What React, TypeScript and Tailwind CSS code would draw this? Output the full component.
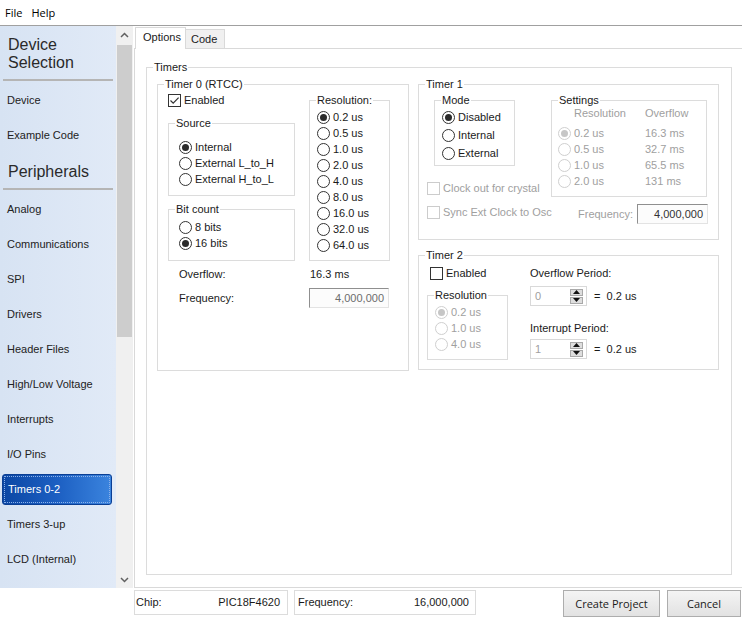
// Timer configuration page of the project wizard: sidebar, tabbed options, status bar.

import clsx from "clsx";
import type { ReactNode } from "react";

const peripherals = [
  "Analog",
  "Communications",
  "SPI",
  "Drivers",
  "Header Files",
  "High/Low Voltage",
  "Interrupts",
  "I/O Pins",
  "Timers 0-2",
  "Timers 3-up",
  "LCD (Internal)",
];

const resolutions = ["0.2 us", "0.5 us", "1.0 us", "2.0 us", "4.0 us", "8.0 us", "16.0 us", "32.0 us", "64.0 us"];

const timer1Settings = [
  ["0.2 us", "16.3 ms"],
  ["0.5 us", "32.7 ms"],
  ["1.0 us", "65.5 ms"],
  ["2.0 us", "131 ms"],
];

function Group({
  title,
  className,
  bodyClass,
  children,
}: {
  title: string;
  className?: string;
  bodyClass?: string;
  children?: ReactNode;
}) {
  return (
    <fieldset className={clsx("min-w-0 shrink-0 border border-[#dcdcdc]", className)}>
      <legend className="ml-[6px] px-[1px] leading-[13px]">{title}</legend>
      <div className={bodyClass}>{children}</div>
    </fieldset>
  );
}

function RadioDot({ checked, disabled }: { checked?: boolean; disabled?: boolean }) {
  return (
    <span
      className={clsx(
        "flex h-[13px] w-[13px] shrink-0 items-center justify-center rounded-full border bg-white",
        disabled ? "border-[#cfcfcf]" : "border-[#333333]"
      )}
    >
      {checked && (
        <span className={clsx("h-[7px] w-[7px] rounded-full", disabled ? "bg-[#c6c6c6]" : "bg-[#2b2b2b]")} />
      )}
    </span>
  );
}

function Radio({
  label,
  checked,
  disabled,
  tall,
}: {
  label: string;
  checked?: boolean;
  disabled?: boolean;
  tall?: boolean;
}) {
  return (
    <div className={clsx("flex items-center", tall ? "h-[18px]" : "h-[16px]")}>
      <RadioDot checked={checked} disabled={disabled} />
      <span className={clsx("ml-[3px] whitespace-nowrap", disabled && "text-[#a0a0a0]")}>{label}</span>
    </div>
  );
}

function Check({ label, checked, disabled }: { label: string; checked?: boolean; disabled?: boolean }) {
  return (
    <div className="flex h-[13px] items-center">
      <span
        className={clsx(
          "flex h-[13px] w-[13px] shrink-0 items-center justify-center border bg-white",
          disabled ? "border-[#cccccc]" : "border-[#333333]"
        )}
      >
        {checked && (
          <svg width="11" height="11" viewBox="0 0 11 11">
            <path d="M1.5 5.5 L4.2 8.2 L9.6 2.6" stroke="#333333" strokeWidth="1.2" fill="none" />
          </svg>
        )}
      </span>
      <span className={clsx("ml-[3px] whitespace-nowrap", disabled && "text-[#a0a0a0]")}>{label}</span>
    </div>
  );
}

function SunkenInput({ value, muted, className }: { value: string; muted?: boolean; className?: string }) {
  return (
    <div
      className={clsx(
        "flex h-[20px] items-center justify-end border border-t-[#8f8f8f] border-l-[#8f8f8f] border-r-[#e3e3e3] border-b-[#e3e3e3] bg-[#fcfcfc] pr-[4px]",
        muted ? "text-[#6d6d6d]" : "text-[#333333]",
        className
      )}
    >
      {value}
    </div>
  );
}

function SpinButton({ up }: { up?: boolean }) {
  return (
    <span className="flex h-[7px] w-[13px] items-center justify-center border border-[#a9a9a9] bg-[#dedede]">
      <svg width="7" height="4" viewBox="0 0 7 4">
        <path d={up ? "M0 4 L3.5 0 L7 4 Z" : "M0 0 L7 0 L3.5 4 Z"} fill="#111111" />
      </svg>
    </span>
  );
}

function Spinner({ value }: { value: string }) {
  return (
    <div className="flex h-[20px] w-[57px] items-center justify-between border border-[#d9d9d9] bg-white pl-[4px] pr-[3px]">
      <span className="text-[#a0a0a0]">{value}</span>
      <div className="flex flex-col gap-[1px]">
        <SpinButton up />
        <SpinButton />
      </div>
    </div>
  );
}

function SideHeader({ children }: { children: ReactNode }) {
  return (
    <div className="shrink-0 pt-[10px]">
      <div className="pl-[8px] text-[16px] leading-[18px] text-[#2a2a2a]">{children}</div>
      <div className="mx-[3px] mb-[2px] mt-[7px] h-[2px] bg-[#b5b5b5]" />
    </div>
  );
}

function SideItem({ label, active }: { label: string; active?: boolean }) {
  if (active) {
    return (
      <div className="flex h-[35px] shrink-0 items-center px-[2px]">
        <div className="flex h-[31px] w-[110px] items-center rounded-[3px] border border-[#0b3f94] bg-linear-to-r from-[#0c47a4] via-[#1c5fc2] to-[#3b84de] pl-[5px] text-white outline-1 outline-offset-[-3px] outline-[#8db2ea] outline-dotted">
          {label}
        </div>
      </div>
    );
  }
  return <div className="flex h-[35px] shrink-0 items-center pl-[7px] text-[#222222]">{label}</div>;
}

function Chevron({ up }: { up?: boolean }) {
  return (
    <svg width="9" height="6" viewBox="0 0 9 6">
      <path d={up ? "M1 5 L4.5 1.5 L8 5" : "M1 1 L4.5 4.5 L8 1"} stroke="#606060" strokeWidth="1.5" fill="none" />
    </svg>
  );
}

function Timer0() {
  return (
    <Group title="Timer 0 (RTCC)" className="h-[293px] w-[252px]">
      <div className="flex pl-[10px]">
        <div className="flex w-[127px] shrink-0 flex-col">
          <div className="mt-[3px]">
            <Check label="Enabled" checked />
          </div>
          <Group title="Source" className="mt-[10px] h-[79px] w-[127px]" bodyClass="pl-[10px] pt-[9px]">
            <Radio label="Internal" checked />
            <Radio label="External L_to_H" />
            <Radio label="External H_to_L" />
          </Group>
          <Group title="Bit count" className="mt-[7px] h-[58px] w-[127px]" bodyClass="pl-[10px] pt-[3px]">
            <Radio label="8 bits" />
            <Radio label="16 bits" checked />
          </Group>
        </div>
        <Group title="Resolution:" className="ml-[14px] mt-[3px] h-[167px] w-[81px]" bodyClass="pl-[7px] pt-[2px]">
          {resolutions.map((r, i) => (
            <Radio key={r} label={r} checked={i === 0} />
          ))}
        </Group>
      </div>
      <div className="mt-[7px] flex h-[13px] items-center pl-[21px]">
        <span className="w-[131px]">Overflow:</span>
        <span>16.3 ms</span>
      </div>
      <div className="mt-[7px] flex items-center pl-[21px]">
        <span className="w-[130px]">Frequency:</span>
        <SunkenInput value="4,000,000" muted className="w-[80px]" />
      </div>
    </Group>
  );
}

function Timer1() {
  return (
    <Group title="Timer 1" className="h-[162px] w-[301px]">
      <div className="flex pl-[8px]">
        <div className="flex w-[124px] shrink-0 flex-col">
          <Group title="Mode" className="ml-[7px] mt-[3px] h-[72px] w-[81px]" bodyClass="pl-[7px] pt-[1px]">
            <Radio label="Disabled" checked tall />
            <Radio label="Internal" tall />
            <Radio label="External" tall />
          </Group>
          <div className="mt-[16px]">
            <Check label="Clock out for crystal" disabled />
          </div>
          <div className="mt-[11px]">
            <Check label="Sync Ext Clock to Osc" disabled />
          </div>
        </div>
        <div className="flex flex-col">
          <Group title="Settings" className="mt-[3px] h-[103px] w-[156px]" bodyClass="pl-[6px]">
            <div className="flex h-[13px] items-center pl-[16px] text-[#a0a0a0]">
              <span className="w-[71px]">Resolution</span>
              <span>Overflow</span>
            </div>
            <div className="mt-[5px]">
              {timer1Settings.map(([res, ovf], i) => (
                <div key={res} className="flex h-[16px] items-center text-[#a0a0a0]">
                  <RadioDot checked={i === 0} disabled />
                  <span className="ml-[3px] w-[71px]">{res}</span>
                  <span>{ovf}</span>
                </div>
              ))}
            </div>
          </Group>
          <div className="mt-[7px] flex items-center">
            <span className="ml-[27px] w-[59px] text-[#a0a0a0]">Frequency:</span>
            <SunkenInput value="4,000,000" className="w-[71px]" />
          </div>
        </div>
      </div>
    </Group>
  );
}

function Timer2() {
  return (
    <Group title="Timer 2" className="mt-[9px] h-[121px] w-[301px]">
      <div className="flex pl-[8px]">
        <div className="flex w-[103px] shrink-0 flex-col">
          <div className="ml-[3px] mt-[5px]">
            <Check label="Enabled" />
          </div>
          <Group title="Resolution" className="mt-[9px] h-[71px] w-[81px]" bodyClass="pl-[7px] pt-[2px]">
            <Radio label="0.2 us" checked disabled />
            <Radio label="1.0 us" disabled />
            <Radio label="4.0 us" disabled />
          </Group>
        </div>
        <div className="flex flex-col">
          <div className="mt-[5px] flex h-[13px] items-center">Overflow Period:</div>
          <div className="mt-[6px] flex items-center">
            <Spinner value="0" />
            <span className="ml-[7px] whitespace-pre">{"=  0.2 us"}</span>
          </div>
          <div className="mt-[16px] flex h-[13px] items-center">Interrupt Period:</div>
          <div className="mt-[4px] flex items-center">
            <Spinner value="1" />
            <span className="ml-[7px] whitespace-pre">{"=  0.2 us"}</span>
          </div>
        </div>
      </div>
    </Group>
  );
}

export default function App() {
  return (
    <div className="flex h-[619px] w-[742px] flex-col overflow-hidden bg-white font-['Liberation_Sans',Arial,sans-serif] text-[11px] leading-[13px] text-[#1a1a1a]">
      {/* Menu bar */}
      <div className="flex h-[26px] shrink-0 items-center gap-[9px] border-b border-[#a0a0a0] pl-[5px] font-['Open_Sans',sans-serif] text-[11px] text-black">
        <span>File</span>
        <span>Help</span>
      </div>

      <div className="flex h-[562px] shrink-0">
        {/* Navigation sidebar */}
        <div className="flex w-[116px] shrink-0 flex-col overflow-hidden bg-linear-to-r from-[#d7e3f3] to-[#e1eaf7]">
          <SideHeader>
            Device
            <br />
            Selection
          </SideHeader>
          <SideItem label="Device" />
          <SideItem label="Example Code" />
          <SideHeader>Peripherals</SideHeader>
          {peripherals.map((p) => (
            <SideItem key={p} label={p} active={p === "Timers 0-2"} />
          ))}
        </div>

        {/* Scrollbar */}
        <div className="flex w-[17px] shrink-0 flex-col bg-[#f0f0f0]">
          <div className="flex h-[18px] items-center justify-center">
            <Chevron up />
          </div>
          <div className="mx-[1px] mt-[1px] h-[292px] bg-[#cdcdcd]" />
          <div className="flex-1" />
          <div className="flex h-[17px] items-center justify-center">
            <Chevron />
          </div>
        </div>

        {/* Tabs */}
        <div className="flex min-w-0 flex-1 flex-col pl-[1px]">
          <div className="flex h-[22px] shrink-0 items-end pl-[1px]">
            <div className="relative z-10 -mb-px h-[22px] w-[51px] border border-b-0 border-[#d9d9d9] bg-white pl-[7px] pt-[3px]">
              Options
            </div>
            <div className="h-[19px] w-[39px] border-r border-t border-[#d9d9d9] bg-[#f0f0f0] pl-[5px] pt-[3px]">
              Code
            </div>
          </div>
          <div className="flex-1 border border-r-0 border-[#d9d9d9] bg-white pl-[11px] pt-[12px]">
            <Group title="Timers" className="h-[514px] w-[586px]" bodyClass="flex gap-[9px] pl-[10px] pt-[4px]">
              <Timer0 />
              <div className="flex flex-col">
                <Timer1 />
                <Timer2 />
              </div>
            </Group>
          </div>
        </div>
      </div>

      {/* Status bar */}
      <div className="flex h-[31px] shrink-0 items-start pl-[134px] pt-[2px]">
        <div className="flex h-[25px] w-[154px] items-center justify-between border border-[#dcdcdc] pl-[1px] pr-[7px]">
          <span>Chip:</span>
          <span>PIC18F4620</span>
        </div>
        <div className="ml-[6px] flex h-[25px] w-[182px] items-center justify-between border border-[#dcdcdc] pl-[3px] pr-[6px]">
          <span>Frequency:</span>
          <span>16,000,000</span>
        </div>
        <div className="ml-auto mr-[1px] flex gap-[7px] font-['Open_Sans',sans-serif] text-[11px] text-[#1a1a1a]">
          <button className="h-[27px] w-[97px] border border-[#adadad] bg-linear-to-b from-[#f4f4f4] to-[#e2e2e2]">
            Create Project
          </button>
          <button className="h-[27px] w-[74px] border border-[#adadad] bg-linear-to-b from-[#f4f4f4] to-[#e2e2e2]">
            Cancel
          </button>
        </div>
      </div>
    </div>
  );
}
